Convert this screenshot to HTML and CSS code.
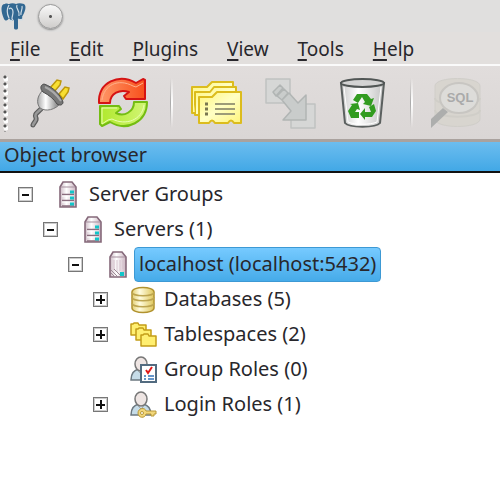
FILE: index.html
```html
<!DOCTYPE html>
<html lang="en">
<head>
<meta charset="utf-8">
<title>Object browser</title>
<link rel="stylesheet" href="styles.css">
</head>
<body>
<svg class="defs" aria-hidden="true">
  <defs>
    <linearGradient id="metal"><stop offset="0" stop-color="#aaa"/><stop offset=".35" stop-color="#fff"/><stop offset="1" stop-color="#666"/></linearGradient>
    <linearGradient id="red" x2="1"><stop offset="0" stop-color="#ff9868"/><stop offset="1" stop-color="#f8501c"/></linearGradient>
    <linearGradient id="green" x2="1"><stop offset="0" stop-color="#b0e92c"/><stop offset="1" stop-color="#d2f576"/></linearGradient>
    <linearGradient id="paper" x2="1" y2="1"><stop offset="0" stop-color="#fff67c"/><stop offset=".5" stop-color="#ffffc4"/><stop offset="1" stop-color="#fff47c"/></linearGradient>
    <linearGradient id="bin"><stop offset="0" stop-color="#c9c9c9"/><stop offset=".4" stop-color="#fff"/><stop offset="1" stop-color="#c2c2c2"/></linearGradient>
    <linearGradient id="gold"><stop offset="0" stop-color="#e3cf72"/><stop offset=".35" stop-color="#fffce0"/><stop offset="1" stop-color="#dfc75c"/></linearGradient>
    <linearGradient id="tower"><stop offset="0" stop-color="#cdbac5"/><stop offset=".4" stop-color="#fff"/><stop offset="1" stop-color="#cbb5c1"/></linearGradient>
    <symbol id="server" viewBox="0 0 28 28">
      <path d="M6 6 9 1h9l4 5v20H6z" fill="url(#tower)" stroke="#85697a" stroke-width="1.600"/>
      <path d="M7 6h14" stroke="#a58f9d"/>
      <path d="M8 13.500h12M8 19.500h12M8 25h12" stroke="#8a6d7e" stroke-width="1.500"/>
      <path d="M8 15h12M8 21h12" stroke="#fff"/>
      <path d="M16 11h4M16 17h4M16 23h4" stroke="#12c5c9" stroke-width="3"/>
    </symbol>
    <symbol id="person" viewBox="0 0 28 28">
      <path d="M2 24c0-7 3-10 8-11h4c5 1 8 4 8 11z" fill="#c6dce8" stroke="#6c7880" stroke-width="1.500"/>
      <path d="m8 13 4 5 4-5" fill="#eef5f8" stroke="#8b969c"/>
      <ellipse cx="12" cy="8" rx="6" ry="7" fill="#eee5e3" stroke="#777" stroke-width="1.500"/>
    </symbol>
  </defs>
</svg>

<header class="titlebar">
  <svg class="logo" viewBox="0 0 27 28" aria-hidden="true">
    <path d="M5 2C0 2 1 10 4 17c2 3 4 1 5-1 1 2 3 3 5 2v8c0 2 4 2 4 0v-9c4 1 5-1 4-2 3-5 5-11 2-13-3-1-6-1-8 0-2-1-5-1-7 0-1 0-3-1-4 0z" fill="#326892"/>
    <path d="M9 3C6 8 7 12 9 16m0-9c2-2 4 0 4 3s-1 4-1 7m5-14c-2 4 3 4 2 11m3-10c1 4-2 6-1 9m-8 4c-1 2-2 2-4 2m9-2c2 1 4 1 5 0" fill="none" stroke="#cfdde7" stroke-width="1.200"/>
  </svg>
  <button class="window-button" aria-label="Window menu"></button>
</header>

<nav class="menubar">
  <button><u>F</u>ile</button>
  <button><u>E</u>dit</button>
  <button><u>P</u>lugins</button>
  <button><u>V</u>iew</button>
  <button><u>T</u>ools</button>
  <button><u>H</u>elp</button>
</nav>

<div class="toolbar" role="toolbar">
  <span class="grip"></span>
  <div class="tools">
    <button aria-label="Connect">
      <svg viewBox="0 0 50 50">
        <path d="M17 31c-4 4-7 5-5 9 1 3-2 4-3 7" fill="none" stroke="#5c5c5c" stroke-width="5" stroke-linecap="round"/>
        <path d="M17 31c-4 4-7 5-5 9 1 3-2 4-3 7" fill="none" stroke="#999" stroke-width="2.500" stroke-linecap="round"/>
        <path d="m26 10 7-8 4 1-1 4-6 7zM35 16l6-7 4 1-1 4-5 7z" fill="#f8df32" stroke="#bd970a" stroke-width="1.500"/>
        <path d="M19 12c-6 6-7 13-3 18 6 4 15 2 21-5z" fill="url(#metal)" stroke="#777"/>
        <path d="M20 6c-4 1-4 5-1 8 6 3 11 7 14 12 3 2 6 1 6-2-3-8-10-15-19-18z" fill="#777" stroke="#4c4c4c"/>
        <path d="M21 9c7 3 12 8 16 14" fill="none" stroke="#aaa" stroke-width="2"/>
      </svg>
    </button>
    <button aria-label="Refresh">
      <svg viewBox="0 0 50 50">
        <path d="M1 25C0 4 21-5 38 5l7-4 2 1v19H28l-2-3 5-4c-9-3-19 1-19 11z" fill="url(#red)" stroke="#d51313" stroke-width="2" stroke-linejoin="round"/>
        <path d="M4 22C6 7 20 0 35 8l3 1 7-4" fill="none" stroke="#ffb08c"/>
        <path d="M49 24c0 20-20 30-37 20l-8 4-2-2V28h19l2 3-5 4c8 4 18-1 18-11z" fill="url(#green)" stroke="#74bd12" stroke-width="2" stroke-linejoin="round"/>
        <path d="M46 27C44 42 28 48 14 41l-4 1-6 4V30h15" fill="none" stroke="#e8ffb2"/>
      </svg>
    </button>
  </div>
  <span class="separator"></span>
  <div class="tools">
    <button aria-label="Properties">
      <svg viewBox="0 0 50 50">
        <g fill="url(#paper)" stroke="#dcbc1d" stroke-width="2" stroke-linejoin="round">
          <path d="M2 9h15l5-5h21v26H2z"/><path d="M5 14h15l4-5h22v28H5z"/><path d="M2 9v26h3"/>
          <path d="M9 19h13l5-5h24v31h-7q-3-5-6 0H25q-3-5-6 0H9z"/>
        </g>
        <path d="M15 26h3M15 31h3M15 36h3" stroke="#797751" stroke-width="3"/>
        <path d="M25 26h20M25 31h20M25 36h20" stroke="#9d9c78" stroke-width="2"/>
      </svg>
    </button>
    <button aria-label="Create" disabled>
      <svg viewBox="0 0 50 50" fill="#d6d7d6" stroke="#c0c2c1" stroke-width="1.500" stroke-linejoin="round">
        <path d="M2 1h24v24H2zM27 26h24v24H27z"/>
        <path d="m9 14 7-7 3 3-7 8zM13 18l7-7 4 4-6 7zM18 22l7-7 9 10 8-8v25H19l8-9z" fill="#c9cccb" stroke="#b1b5b4"/>
      </svg>
    </button>
    <button aria-label="Drop">
      <svg viewBox="0 0 50 50">
        <path d="m3 5 4 40c4 5 31 5 35 0l4-40z" fill="url(#bin)" stroke="#5b605f" stroke-width="2"/>
        <ellipse cx="24.500" cy="5" rx="21.500" ry="4" fill="#d3d3d3" stroke="#515655" stroke-width="2"/>
        <path d="m6 9 4 35c7 3 22 3 29 0l4-35" fill="none" stroke="#fff"/>
        <g fill="#329c20">
          <path d="m15 22 4-6h10l4 5 3-1-3 8-8-2 2-2-3-5-4 6z"/>
          <path d="m31 29 5-3 2 7-4 6h-7v3l-5-6 5-6v4h6z"/>
          <path d="m12 26 8-1 2 7-3-1-2 3h4v6h-8l-3-7 4-6z"/>
        </g>
      </svg>
    </button>
  </div>
  <span class="separator"></span>
  <div class="tools">
    <button aria-label="SQL query" disabled>
      <svg viewBox="0 0 50 50">
        <path d="M5 8c0-10 45-10 45 0v33c0 10-45 10-45 0z" fill="#d8d5cf" stroke="#d0cec9"/>
        <path d="M5 20c0 9 45 9 45 0M5 32c0 9 45 9 45 0" fill="none" stroke="#d0cec8" stroke-width="2"/>
        <path d="M1 41 13 30l5 4L1 50z" fill="#adaead"/>
        <ellipse cx="29" cy="20" rx="19" ry="15" fill="#dddcd9" stroke="#c8c6c2" stroke-width="2"/>
        <text class="sql" x="30" y="24" text-anchor="middle">SQL</text>
      </svg>
    </button>
  </div>
</div>

<main>
  <h1 class="caption">Object browser</h1>
  <ul class="tree">
    <li>
      <div class="row"><button class="toggle" aria-label="Collapse"></button><svg class="icon"><use href="#server"/></svg><span class="label">Server Groups</span></div>
      <ul>
        <li>
          <div class="row"><button class="toggle" aria-label="Collapse"></button><svg class="icon"><use href="#server"/></svg><span class="label">Servers (1)</span></div>
          <ul>
            <li>
              <div class="row"><button class="toggle" aria-label="Collapse"></button>
                <svg class="icon" viewBox="0 0 28 28">
                  <path d="M6 6 9 1h9l4 5v20H6z" fill="url(#tower)" stroke="#85697a" stroke-width="1.600"/>
                  <path d="M7 6h14" stroke="#a58f9d"/>
                  <path d="M10 9v10M13 9v12M16 9v11M19 9v9" stroke="#d5c2cd"/>
                  <path d="m7 19 7 7m-4-8 7 7m-10-3 3 3" stroke="#9c8b95"/>
                  <path d="M16 23h4" stroke="#12c5c9" stroke-width="4"/>
                </svg>
                <span class="label selected">localhost (localhost:5432)</span></div>
              <ul>
                <li><div class="row"><button class="toggle closed" aria-label="Expand"></button>
                  <svg class="icon" viewBox="0 0 28 28">
                    <path d="M3 6c0-6 22-6 22 0v16c0 6-22 6-22 0z" fill="url(#gold)" stroke="#b1922f" stroke-width="1.500"/>
                    <path d="M3 6c0 5 22 5 22 0M3 11c0 5 22 5 22 0M3 17c0 5 22 5 22 0" fill="none" stroke="#bda550" stroke-width="1.500"/>
                  </svg><span class="label">Databases (5)</span></div></li>
                <li><div class="row"><button class="toggle closed" aria-label="Expand"></button>
                  <svg class="icon" viewBox="0 0 28 28" fill="#ffef70" stroke="#c49d17" stroke-width="1.500" stroke-linejoin="round">
                    <path d="M2 3h2l1-1h4l1 2h7v10H2z"/><path d="M7 8h2l1-1h4l1 2h7v10H7z"/><path d="M12 14h2l1-1h4l1 2h7v10H12z"/>
                  </svg><span class="label">Tablespaces (2)</span></div></li>
                <li><div class="row"><span class="toggle-space"></span>
                  <svg class="icon" viewBox="0 0 28 28">
                    <use href="#person" width="28" height="28"/>
                    <path d="M12 9h15v17H12z" fill="#fff" stroke="#526b80" stroke-width="2"/>
                    <path d="m17 14 2 3 4-6" fill="none" stroke="#e21a1a" stroke-width="2"/>
                    <path d="M15 20h2m2 0h6M15 23h2m2 0h6" stroke="#3574ba" stroke-width="1.500"/>
                  </svg><span class="label">Group Roles (0)</span></div></li>
                <li><div class="row"><button class="toggle closed" aria-label="Expand"></button>
                  <svg class="icon" viewBox="0 0 28 28">
                    <use href="#person" width="28" height="28"/>
                    <path d="M17 20h10v3h-2v2h-3v-2h-5c-1 5-8 4-8-1s7-6 8-2z" fill="#f2d77b" stroke="#b99836"/>
                    <circle cx="13" cy="22" r="1.500" fill="#fff" stroke="#b99836"/>
                  </svg><span class="label">Login Roles (1)</span></div></li>
              </ul>
            </li>
          </ul>
        </li>
      </ul>
    </li>
  </ul>
</main>
</body>
</html>
```
FILE: styles.css
```css
* { box-sizing: border-box; }

body {
  margin: 0;
  background: #fff;
  color: #28272c;
  font: 20px/24px "Noto Sans", "Open Sans", sans-serif;
}

button {
  padding: 0;
  border: 0;
  background: none;
  color: inherit;
  font: inherit;
}

ul { margin: 0; padding: 0; list-style: none; }

.defs { position: absolute; width: 0; height: 0; }

.titlebar {
  display: flex;
  align-items: center;
  gap: 11px;
  height: 32px;
  background: #e0dfde;
}

.logo { width: 27px; height: 28px; }

.window-button {
  width: 25px;
  height: 25px;
  border: 1px solid #999;
  border-radius: 50%;
  background: radial-gradient(circle, #555 0 1px, transparent 2px), linear-gradient(#f8f8f8, #cfcdcb);
  box-shadow: 0 1px 2px #888;
}

.menubar {
  display: flex;
  align-items: flex-start;
  gap: 29px;
  height: 34px;
  padding: 5px 10px 0;
  border-bottom: 2px solid #fafafa;
  background: #e2dfdd;
  font-size: 19px;
}

.menubar u { text-underline-offset: 3px; text-decoration-thickness: 2px; }

.toolbar {
  display: flex;
  align-items: flex-start;
  height: 76px;
  padding: 12px 3px 0;
  border-bottom: 3px solid #aaa29e;
  background: linear-gradient(#e1dddc, #dad6d5);
}

.grip {
  width: 5px;
  height: 57px;
  margin: -3px 16px 0 0;
  background: linear-gradient(#555, #555) 0 0 / 3px 100% no-repeat;
  background: radial-gradient(circle at 2px 2px, #555 0 1px, transparent 2px) 0 0 / 5px 7px,
    radial-gradient(circle at 3px 4px, #fff 0 2px, transparent 3px) 0 0 / 5px 7px;
}

.tools { display: flex; gap: 24px; }
.tools button { width: 50px; height: 50px; }
.tools svg { display: block; width: 50px; height: 50px; overflow: visible; }

.separator {
  width: 42px;
  height: 50px;
  background: linear-gradient(transparent, #aaa 50%, transparent) 22px 0 / 1px 100% no-repeat,
    linear-gradient(transparent, #fff 50%, transparent) 23px 0 / 2px 100% no-repeat;
}

.sql { fill: #aaa; font: bold 13px "Liberation Sans", sans-serif; }

.caption {
  height: 31px;
  margin: 0;
  padding: 1px 4px 0;
  border-bottom: 2px solid #111;
  background: linear-gradient(#6cbdef, #42a8e6);
  font-size: 20px;
  font-weight: 400;
}

.tree { padding: 4px 0 0 18px; }
.tree ul { padding-left: 25px; }

.row { display: flex; align-items: center; height: 35px; }

.toggle, .toggle-space { width: 15px; height: 15px; margin-right: 21px; }

.toggle {
  border: 1px solid #777;
  outline: 1px solid #ccc;
  outline-offset: -2px;
  background: linear-gradient(#111, #111) center / 7px 2px no-repeat, #fff;
}

.toggle.closed {
  background: linear-gradient(#111, #111) center / 9px 2px no-repeat,
    linear-gradient(#111, #111) center / 2px 9px no-repeat, #fff;
}

.icon { width: 28px; height: 28px; overflow: visible; }

.label {
  height: 35px;
  margin-left: 2px;
  padding: 0 4px;
  border: 1px solid transparent;
  border-radius: 4px;
  line-height: 32px;
  white-space: nowrap;
}

.selected {
  border-color: #3d99d4;
  background: linear-gradient(#76caff, #46abe9);
}
```
